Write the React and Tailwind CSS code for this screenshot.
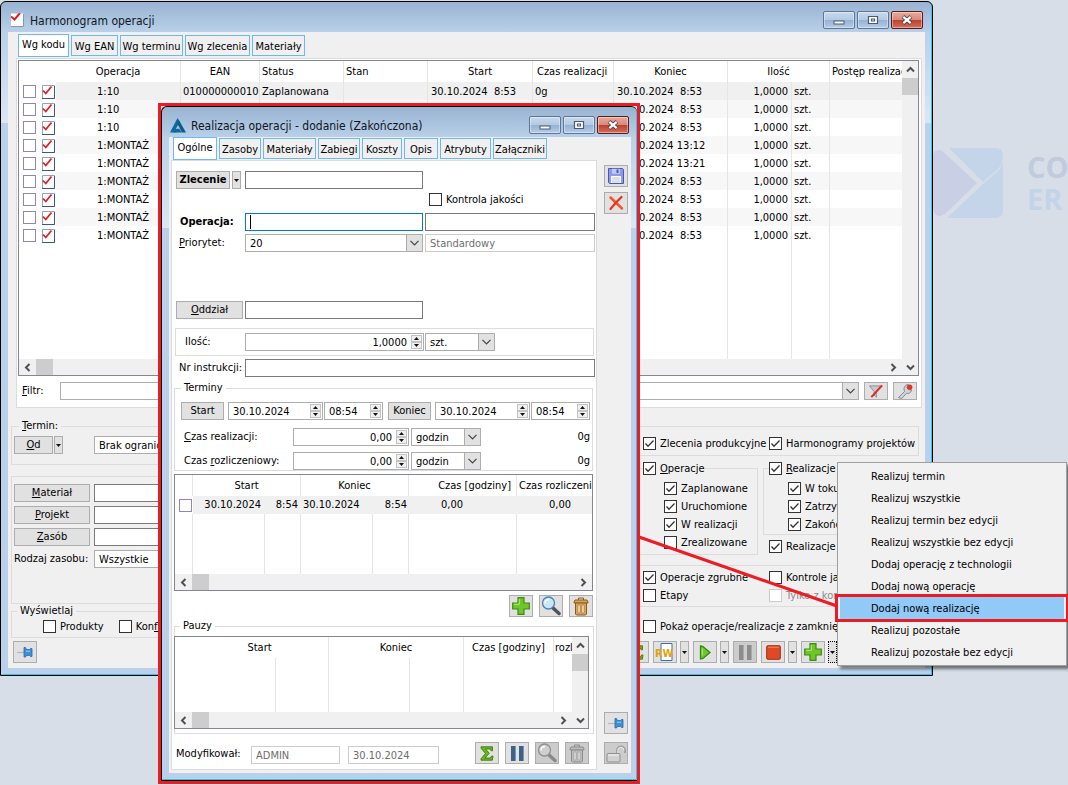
import React from "react";

/* ---------- small drawings ---------- */

const Tri = ({ up }) => (
  <svg width="5" height="3" viewBox="0 0 5 3" aria-hidden="true">
    <path d={up ? "M2.5 0 5 3H0z" : "M2.5 3 5 0H0z"} fill="#111" />
  </svg>
);

const Chevron = ({ d, size = 9 }) => (
  <svg width={size} height={size} viewBox="0 0 9 9" fill="none" stroke="#505050" strokeWidth="2" aria-hidden="true">
    <path d={d} />
  </svg>
);
const LEFT = "M6.5 1 3 4.5 6.5 8";
const RIGHT = "M2.5 1 6 4.5 2.5 8";
const UP = "M1 6.5 4.5 3 8 6.5";
const DOWN = "M1 2.5 4.5 6 8 2.5";

const DocCheck = () => (
  <svg width="13" height="14" viewBox="0 0 13 14" aria-hidden="true">
    <path d="M.5 .5h12v13H.5z" fill="#fff" stroke="#8fa3bb" />
    <path d="M12.5 1v12.5H0" fill="none" stroke="#3f5877" />
    <path d="M1 5.5 3.8 8.5 9.5 1.5" fill="none" stroke="#e02020" strokeWidth="1.8" />
  </svg>
);

const PageCheck = () => (
  <svg width="13" height="14" viewBox="0 0 13 14" aria-hidden="true">
    <path d="M0 .5h12.500v13H0z" fill="#fff" />
    <path d="M12.500 1v12.500H0" fill="none" stroke="#8798ad" />
    <path d="M0 3.500 3.500 6.500 9 0" fill="none" stroke="#e02020" strokeWidth="2" />
  </svg>
);

const Pin = () => (
  <svg width="18" height="14" viewBox="0 0 18 14" aria-hidden="true">
    <path d="M1 7.5h7" stroke="#b4b8bd" strokeWidth="1.2" />
    <path d="M8 2.500h1.500l1 2h3l1-1h1.500v8h-1.500l-1-1h-3l-1 1.500H8z" fill="#3f8fd6" stroke="#2868a8" strokeWidth=".8" />
    <path d="M10 6.200h4" stroke="#9fd0f5" />
  </svg>
);

const Plus = () => (
  <svg width="18" height="18" viewBox="0 0 18 18" aria-hidden="true">
    <path d="M6 .7h6v5.300h5.300v6H12v5.300H6V12H.7V6H6z" fill="#6fc62a" stroke="#3f8a10" strokeWidth="1.200" />
    <path d="M7.300 2v5.300H2" fill="none" stroke="#b5ec7c" />
  </svg>
);

const Lens = ({ off }) => (
  <svg width="20" height="20" viewBox="0 0 20 20" aria-hidden="true">
    <path d="M11.500 11.500 18 17.500" stroke={off ? "#8a8a8a" : "#4a5560"} strokeWidth="3.500" strokeLinecap="round" />
    <circle cx="7.500" cy="7" r="6" fill={off ? "#cfcfcf" : "#c9e7fb"} stroke={off ? "#909090" : "#4f7fae"} strokeWidth="1.300" />
    <path d="M4 7.500C4 5 5.500 3.500 8 3.500" fill="none" stroke="#fff" strokeWidth="1.300" />
  </svg>
);

const Trash = ({ off }) => {
  const line = off ? "#8c8c8c" : "#8a5a1c";
  const fill = off ? "#bdbdbd" : "#d9a75a";
  return (
    <svg width="16" height="19" viewBox="0 0 16 19" aria-hidden="true">
      <path d="M5.500 3V1h5v2" fill="none" stroke={line} />
      <path d="M2 3h12l1 2v1H1V5z" fill={fill} stroke={line} />
      <path d="M2.500 6h11v11l-1 1h-9l-1-1z" fill={fill} stroke={line} />
      <path d="M5 8h2v8H5zM9 8h2v8H9z" fill={off ? "#e6e6e6" : "#fff1d6"} stroke={line} strokeWidth=".5" />
    </svg>
  );
};

const Save = () => (
  <svg width="16" height="16" viewBox="0 0 16 16" aria-hidden="true">
    <path d="M.5 .5h14l1 1v14h-14l-1-1z" fill="#8b9bea" stroke="#4a55b5" />
    <path d="M4 .8h8v5H4z" fill="#c3ccf8" />
    <path d="M8.500 1.500h2v3.500h-2z" fill="#4a55b5" />
    <path d="M3 8h10v7H3z" fill="#fff" />
    <path d="M4 10h8M4 12h8M4 14h8" stroke="#b7c0d0" />
  </svg>
);

const RedX = () => (
  <svg width="16" height="16" viewBox="0 0 16 16" fill="none" strokeLinecap="round" aria-hidden="true">
    <path d="M2.500 2.500 14 13.500" stroke="#f0552d" strokeWidth="2.500" />
    <path d="M13.500 2 8 7.500 2.500 14" stroke="#e8331c" strokeWidth="2.200" />
  </svg>
);

const Lock = () => (
  <svg width="20" height="19" viewBox="0 0 20 19" aria-hidden="true">
    <path d="M11 10V6.500a4 4 0 0 1 8 0V9" fill="none" stroke="#a2a2a2" strokeWidth="2" />
    <path d="M11.800 10V6.500a3 3 0 0 1 6.200 0" fill="none" stroke="#eee" />
    <rect x="1" y="9.500" width="13" height="8.500" rx="1" fill="#d0d0d0" stroke="#8f8f8f" />
    <path d="M2 11h11" stroke="#f5f5f5" />
  </svg>
);

const Sigma = () => (
  <svg width="14" height="15" viewBox="0 0 14 15" aria-hidden="true">
    <path d="M1 .8h11.500v4h-1.400L10.300 3H5.500l3.800 4.300L5 12h5.500l1-2h1.500l-.6 4.200H1v-1.400L5.500 7.500 1 2.200z" fill="#69b51c" stroke="#3d7d0a" strokeWidth=".9" />
  </svg>
);

const Bars = ({ a, b }) => (
  <svg width="15" height="17" viewBox="0 0 15 17" aria-hidden="true">
    <path d="M1 1h5v15H1zM9 1h5v15H9z" fill={a} />
    <path d="M5 1h1v15H5zM13 1h1v15h-1z" fill={b} />
  </svg>
);

const Play = () => (
  <svg width="12" height="15" viewBox="0 0 12 15" aria-hidden="true">
    <path d="M1.500 1 4 1.500 11 7.500 4 13.500 1.500 14z" fill="#6cc62c" stroke="#2f8a12" strokeWidth="1.300" />
    <path d="M3.300 3.500v7" stroke="#b9ef85" />
  </svg>
);

const Stop = () => (
  <svg width="15" height="15" viewBox="0 0 15 15" aria-hidden="true">
    <rect x=".7" y=".7" width="13.600" height="13.600" rx="1" fill="#df4a26" stroke="#a82a10" />
    <path d="M2 2.200h11" stroke="#f28a68" />
  </svg>
);

const FunnelOff = () => (
  <svg width="16" height="15" viewBox="0 0 16 16" aria-hidden="true">
    <path d="M1 2h12L8.500 8v6L6 12V8z" fill="#c5c8cc" stroke="#8b8f95" />
    <path d="M14.500 1.500 3 14" stroke="#e02a1c" strokeWidth="2.200" />
  </svg>
);

const Wrench = () => (
  <svg width="17" height="16" viewBox="0 0 18 17" aria-hidden="true">
    <path d="M1.500 15.500 8 9C6.500 5.500 8 2 12 1.500L10.500 4.500l1.500 2.500 3.500.300C15 10.500 12.500 11.500 10 11l-5 5.500z" fill="#d0d3d7" stroke="#7f858c" />
    <circle cx="13.500" cy="4.500" r="2.800" fill="#e2361f" />
  </svg>
);

const AppLogo = () => (
  <svg width="16" height="15" viewBox="0 0 16 15" aria-hidden="true">
    <path d="M7.500 0 10.500 5 5.500 14.500H0z" fill="#0d6a9f" />
    <path d="M8.500 1.500 16 14.500h-4L7.500 6z" fill="#0a5c8c" />
    <path d="M5 12 9 10.500 12 14.500H3.500z" fill="#0d6a9f" />
    <path d="M8 7 5.800 11.300 9.300 9.800z" fill="#b3cbe2" />
  </svg>
);

/* ---------- controls ---------- */

const face = "flex items-center justify-center border border-[#adadad] bg-[#e1e1e1]";

const Btn = ({ className = "", children, ...p }) => (
  <button type="button" className={`${face} h-[18px] ${className}`} {...p}>
    <span>{children}</span>
  </button>
);

const IconBtn = ({ label, off, short, children }) => (
  <button
    type="button"
    aria-label={label}
    disabled={off}
    className={`flex w-[24px] shrink-0 items-center justify-center overflow-hidden border border-[#adadad] ${short ? "h-[18px]" : "h-[22px]"} ${off ? "bg-[#cccccc]" : "bg-[#e1e1e1]"}`}
  >
    {children}
  </button>
);

const Drop = ({ label, tall, focus }) => (
  <button
    type="button"
    aria-label={label}
    className={`flex w-[9px] shrink-0 items-center justify-center border bg-[#e1e1e1] ${tall ? "h-[22px]" : "h-[18px]"} ${focus ? "border-dotted border-black" : "border-[#adadad]"}`}
  >
    <Tri />
  </button>
);

const Field = ({ label, className = "", tone = "border-[#7a7a7a]", ...p }) => (
  <input aria-label={label} className={`h-[18px] min-w-0 border bg-white px-1 outline-none ${tone} ${className}`} {...p} />
);

const Combo = ({ label, value, id, className = "" }) => (
  <span className={`relative flex h-[18px] ${className}`}>
    <select id={id} aria-label={label} className="w-full appearance-none border border-[#adadad] bg-white px-1 pt-px outline-none">
      <option>{value}</option>
    </select>
    <span className="pointer-events-none absolute inset-y-0 right-0 flex w-[17px] items-center justify-center border border-[#adadad] bg-[#e1e1e1]">
      <svg width="9" height="6" viewBox="0 0 9 6" fill="none" stroke="#444" strokeWidth="1.200" aria-hidden="true">
        <path d="M.5 .8 4.500 4.800 8.500 .8" />
      </svg>
    </span>
  </span>
);

const Spin = ({ label, value, id, right, className = "" }) => (
  <span className={`relative flex h-[18px] ${className}`}>
    <input
      id={id}
      aria-label={label}
      defaultValue={value}
      className={`w-full min-w-0 border border-[#adadad] bg-white pt-px pr-4 pl-1 outline-none ${right ? "text-right" : ""}`}
    />
    <span className="absolute inset-y-[2px] right-[2px] flex w-[11px] flex-col">
      <span className="flex flex-1 items-center justify-center border border-[#c4c4c4] bg-[#f0f0f0]"><Tri up /></span>
      <span className="flex flex-1 items-center justify-center border border-[#c4c4c4] bg-[#f0f0f0]"><Tri /></span>
    </span>
  </span>
);

const Check = ({ on, off, children, className = "" }) => (
  <label className={`flex h-[14px] items-center gap-1 whitespace-nowrap ${off ? "text-[#8a8a8a]" : ""} ${className}`}>
    <span className="relative flex">
      <input
        type="checkbox"
        defaultChecked={on}
        disabled={off}
        className={`peer size-[13px] appearance-none border bg-white ${off ? "border-[#cccccc]" : "border-[#333333]"}`}
      />
      <svg className="pointer-events-none absolute inset-0 hidden peer-checked:block" width="13" height="13" viewBox="0 0 13 13" fill="none" stroke="#333" strokeWidth="1.300" aria-hidden="true">
        <path d="M2.500 6.500 5 9.200 10.500 3.500" />
      </svg>
    </span>
    <span className="pt-px">{children}</span>
  </label>
);

const RowCheck = ({ label }) => (
  <input type="checkbox" aria-label={label} className="size-[13px] shrink-0 appearance-none border border-[#8f86b8] bg-white" />
);

const Tabs = ({ items }) => (
  <div role="tablist" className="flex items-end gap-[2px]">
    {items.map(([name, w], i) => (
      <button
        key={name}
        role="tab"
        type="button"
        aria-selected={i === 0}
        className={`flex justify-center border border-[#6cb8f7] whitespace-nowrap ${w} ${i === 0 ? "h-[23px] bg-white pt-[3px]" : "mb-px h-[21px] bg-[#f0f0f0] pt-1"}`}
      >
        {name}
      </button>
    ))}
  </div>
);

const HScroll = () => (
  <div className="flex h-4 min-w-0 flex-1 items-center bg-[#f0f0f0] pr-1">
    <span className="flex w-[17px] justify-center"><Chevron d={LEFT} /></span>
    <span className="h-full w-[17px] bg-[#cdcdcd]" />
    <span className="ml-auto"><Chevron d={RIGHT} /></span>
  </div>
);

const VScroll = () => (
  <div className="flex w-4 shrink-0 flex-col items-center bg-[#f0f0f0]">
    <span className="flex h-[17px] items-center"><Chevron d={UP} /></span>
    <span className="h-[17px] w-full bg-[#cdcdcd]" />
    <span className="mt-auto flex h-4 items-center"><Chevron d={DOWN} /></span>
  </div>
);

const capBlue = "border-[#5d7597] bg-[linear-gradient(#c9d9ec,#b4cae3_48%,#94b1d3_50%,#b4cde8)]";
const capRed = "border-[#5c1a1a] bg-[linear-gradient(#e9a99b,#d98a7b_48%,#bb4028_50%,#d2705c)]";

const Caption = () => (
  <div className="ml-auto flex gap-[2px] pr-[2px]">
    {[
      ["Minimalizuj", capBlue, <rect key="a" x="1" y="6" width="10" height="3" fill="#fff" stroke="#4a5a70" />],
      ["Maksymalizuj", capBlue, <path key="b" d="M1.500 1.500h9v7h-9zM4.500 4h3v2h-3z" fill="#fff" stroke="#4a5a70" strokeWidth="1.200" />],
      [
        "Zamknij",
        capRed,
        <g key="c" fill="none">
          <path d="M2 1.500 10 8.500M10 1.500 2 8.500" stroke="#59424a" strokeWidth="4" />
          <path d="M2.300 1.800 9.700 8.200M9.700 1.800 2.300 8.200" stroke="#fff" strokeWidth="2.200" />
        </g>,
      ],
    ].map(([n, c, g]) => (
      <button key={n} type="button" aria-label={n} className={`flex h-[18px] w-8 items-center justify-center rounded-xs border shadow-[inset_0_0_0_1px_rgba(255,255,255,0.4)] ${c}`}>
        <svg width="12" height="10" viewBox="0 0 12 10" aria-hidden="true">{g}</svg>
      </button>
    ))}
  </div>
);

const Win = ({ icon, title, edge, children }) => (
  <section
    aria-label={title}
    className={`rounded-t-md border border-black bg-[linear-gradient(#99b3d1,#b9d1ea_31px,#dae7f5_121px,#b9d1ea_121px)] pb-[7px] pl-[7px] shadow-[inset_-1px_-1px_#35c3e6] ${edge}`}
  >
    <header className="flex h-[30px] items-center gap-1 pt-[6px]">
      <span className="flex w-[18px] justify-center">{icon}</span>
      <h1 className="pt-[2px] text-[12px] whitespace-nowrap text-[#10151c]">{title}</h1>
      <Caption />
    </header>
    {children}
  </section>
);

const line = "border-r border-[#e5e5e5]";

/* ---------- schedule window ---------- */

const ROWS = [
  ["1:10", "30.10.2024  8:53"],
  ["1:10", "30.10.2024  8:53"],
  ["1:10", "30.10.2024  8:53"],
  ["1:MONTAŻ", "30.10.2024 13:12"],
  ["1:MONTAŻ", "30.10.2024 13:21"],
  ["1:MONTAŻ", "30.10.2024  8:53"],
  ["1:MONTAŻ", "30.10.2024  8:53"],
  ["1:MONTAŻ", "30.10.2024  8:53"],
  ["1:MONTAŻ", "30.10.2024  8:53"],
];

const ScheduleGrid = () => (
  <div className="border border-[#828790] bg-white">
    <div className="flex">
      <div className="min-w-0 flex-1 overflow-hidden">
        <table className="w-full table-fixed border-separate border-spacing-0 whitespace-pre">
          <colgroup>
            <col className="w-[37px]" />
            <col className="w-[125px]" />
            <col className="w-[79px]" />
            <col className="w-[84px]" />
            <col className="w-[84px]" />
            <col className="w-[105px]" />
            <col className="w-[81px]" />
            <col className="w-[114px]" />
            <col className="w-[64px]" />
            <col className="w-[38px]" />
            <col />
          </colgroup>
          <thead>
            <tr className="h-[21px] text-left *:p-0 *:font-normal">
              <th aria-label="Zaznaczenie" />
              <th className={`${line} text-center`}>Operacja</th>
              <th className={`${line} text-center`}>EAN</th>
              <th className={line}><span className="pl-[2px]">Status</span></th>
              <th className={line}><span className="pl-[2px]">Stan</span></th>
              <th className={`${line} text-center`}>Start</th>
              <th className={line}><span className="pl-1">Czas realizacji</span></th>
              <th className={`${line} text-center`}>Koniec</th>
              <th className={`${line} text-center`} colSpan={2}>Ilość</th>
              <th className="overflow-hidden"><span className="pl-[2px]">Postęp realizacji</span></th>
            </tr>
          </thead>
          <tbody>
            {ROWS.map(([op, end], i) => (
              <tr
                key={i}
                className={`h-[18px] *:px-0 *:pt-[2px] *:pb-0 ${i === 0 ? "bg-[#f0f0f0]" : i % 2 ? "bg-[#f7f7f7]" : "bg-white"}`}
              >
                <td className="bg-white">
                  <span className="flex gap-[6px] pl-1">
                    <RowCheck label={`Wiersz ${i + 1}`} />
                    <DocCheck />
                  </span>
                </td>
                <td className={line}><span className="pl-[41px]">{op}</span></td>
                <td className={line}><span className="pl-[2px]">{i === 0 && "010000000010"}</span></td>
                <td className={line}><span className="pl-[2px]">{i === 0 && "Zaplanowana"}</span></td>
                <td className={line} />
                <td className={line}><span className="pl-[3px]">{i === 0 && "30.10.2024  8:53"}</span></td>
                <td className={line}><span className="pl-[2px]">{i === 0 && "0g"}</span></td>
                <td className={line}><span className="pl-[3px]">{end}</span></td>
                <td className={`${line} text-right`}><span className="pr-[3px]">1,0000</span></td>
                <td className={line}><span className="pl-[2px]">szt.</span></td>
                <td />
              </tr>
            ))}
            <tr className="h-[115px]" aria-hidden="true">
              <td />
              {[1, 2, 3, 4, 5, 6, 7, 8, 9].map((n) => <td key={n} className={line} />)}
              <td />
            </tr>
          </tbody>
        </table>
        <HScroll />
      </div>
      <VScroll />
    </div>
  </div>
);

const box = "border border-[#dcdcdc]";

const LeftFilters = () => (
  <div className="w-[610px] shrink-0 pt-[11px]">
    <fieldset className={`${box} min-w-0 pt-[3px] pb-[10px] pl-[2px]`}>
      <legend className="ml-[5px] px-[3px]"><u>T</u>ermin:</legend>
      <div className="flex">
        <Btn className="w-[39px]"><u>O</u>d</Btn>
        <span className="ml-px flex"><Drop label="Rodzaj terminu" /></span>
        <Combo label="Termin" value="Brak ograniczeń" className="ml-[31px] w-[200px]" />
      </div>
    </fieldset>
    <div className={`${box} mt-[11px] grid grid-cols-[76px_300px] gap-1 pt-[7px] pb-[35px] pl-[2px]`}>
      <Btn><u>M</u>ateriał</Btn>
      <Field label="Materiał" />
      <Btn><u>P</u>rojekt</Btn>
      <Field label="Projekt" />
      <Btn><u>Z</u>asób</Btn>
      <Field label="Zasób" />
      <label htmlFor="rodzaj" className="pt-[2px] whitespace-nowrap">Rodzaj zasobu:</label>
      <Combo id="rodzaj" value="Wszystkie" />
    </div>
    <fieldset className={`${box} min-w-0 pt-px pb-1`}>
      <legend className="ml-[5px] px-[3px]">Wyświetlaj</legend>
      <div className="flex gap-[15px] pl-[31px]">
        <Check>Produkty</Check>
        <Check>Kon<u>fl</u>ikty</Check>
      </div>
    </fieldset>
    <div className="mt-[3px] pl-[2px]"><IconBtn label="Przypnij"><Pin /></IconBtn></div>
  </div>
);

const RightFilters = () => (
  <div className="min-w-0 flex-1 pt-[18px]">
    <div className={`${box} mr-[3px] grid grid-cols-[126px_1fr] pt-[9px] pb-[5px] pl-[21px]`}>
      <Check on>Zlecenia produkcyjne</Check>
      <Check on>Harmonogramy projektów</Check>
    </div>
    <div className="mt-[5px] grid grid-cols-[137px_1fr] items-start gap-[5px]">
      <fieldset className={`${box} flex min-w-0 flex-col gap-1 pt-[6px] pb-[5px] pl-[42px]`}>
        <legend className="-ml-[21px]"><Check on><u>O</u>peracje</Check></legend>
        <Check on>Zaplanowane</Check>
        <Check on>Uruchomione</Check>
        <Check on>W realizacji</Check>
        <Check>Zrealizowane</Check>
      </fieldset>
      <div>
        <fieldset className={`${box} min-w-0 pt-[6px] pb-[3px] pl-6`}>
          <legend className="-ml-[19px]"><Check on><u>R</u>ealizacje zleceń</Check></legend>
          <div className="flex flex-col gap-1">
            <Check on>W toku</Check>
            <Check on>Zatrzymane</Check>
            <Check on>Zakończone</Check>
          </div>
        </fieldset>
        <Check on className="mt-1 pl-[6px]">Realizacje z projektów</Check>
      </div>
    </div>
    <div className={`${box} mt-[10px] grid grid-cols-[126px_1fr] gap-y-1 pt-1 pb-1 pl-[21px]`}>
      <Check on>Operacje zgrubne</Check>
      <Check>Kontrole jakości</Check>
      <Check>Etapy</Check>
      <Check off>Tylko z kontrolą</Check>
    </div>
    <Check className="mt-[12px] pl-[22px]">Pokaż operacje/realizacje z zamkniętych</Check>
    <div className="mt-2 flex gap-1 pl-1">
      <IconBtn label="Bilans"><Sigma /></IconBtn>
      <div className="flex gap-[3px]">
        <IconBtn label="Rozchód wewnętrzny">
          <svg width="22" height="18" viewBox="0 0 22 18" aria-hidden="true">
            <path d="M7 .5h11v17H7z" fill="#fff" stroke="#3b6ea8" />
            <text x="1" y="13.500" fontSize="11" fontWeight="700" fill="#dca30c" fontFamily="DejaVu Sans Condensed, sans-serif">RW</text>
          </svg>
        </IconBtn>
        <Drop tall label="Więcej dokumentów" />
      </div>
      <div className="flex gap-[3px]">
        <IconBtn label="Uruchom"><Play /></IconBtn>
        <Drop tall label="Opcje uruchomienia" />
      </div>
      <IconBtn off label="Wstrzymaj"><Bars a="#8c8c8c" b="#aaaaaa" /></IconBtn>
      <div className="flex gap-[3px]">
        <IconBtn label="Zakończ"><Stop /></IconBtn>
        <Drop tall label="Opcje zakończenia" />
      </div>
      <div className="flex gap-[3px]">
        <IconBtn label="Dodaj"><Plus /></IconBtn>
        <Drop tall focus label="Opcje dodawania" />
      </div>
    </div>
  </div>
);

const Schedule = () => (
  <Win icon={<PageCheck />} title="Harmonogram operacji" edge="pr-[7px]">
    <div className="bg-[#f0f0f0] pt-[2px] pr-[3px] pb-[5px]">
      <div className="pl-[10px]">
        <Tabs
          items={[
            ["Wg kodu", "w-[51px]"],
            ["Wg EAN", "w-[47px]"],
            ["Wg terminu", "w-[63px]"],
            ["Wg zlecenia", "w-[65px]"],
            ["Materiały", "w-[53px]"],
          ]}
        />
      </div>
      <div className={`${box} mt-px ml-2 bg-white pt-px pr-[2px] pb-[7px] pl-px`}>
        <ScheduleGrid />
        <div className="mt-[6px] flex items-center gap-[5px] pr-[2px] pl-1">
          <label htmlFor="filtr" className="w-[33px]"><u>F</u>iltr:</label>
          <Combo id="filtr" value="" className="min-w-0 flex-1" />
          <IconBtn short label="Wyczyść filtr"><FunnelOff /></IconBtn>
          <IconBtn short label="Konstruktor filtra"><Wrench /></IconBtn>
        </div>
      </div>
      <div className="flex pl-[3px]">
        <LeftFilters />
        <RightFilters />
      </div>
    </div>
  </Win>
);

/* ---------- realization dialog ---------- */

const ROW = "grid grid-cols-[67px_178px_1fr] items-center gap-x-[2px] pr-px pl-1";

const TimeGrid = () => (
  <div className="mt-[3px] mr-[3px] ml-[2px] overflow-hidden border border-[#828790]">
    <table className="w-full table-fixed border-separate border-spacing-0 whitespace-nowrap">
      <colgroup>
        <col className="w-[18px]" />
        <col className="w-[72px]" />
        <col className="w-[36px]" />
        <col className="w-[72px]" />
        <col className="w-[36px]" />
        <col className="w-[108px]" />
        <col />
      </colgroup>
      <thead>
        <tr className="h-[21px] *:p-0 *:font-normal">
          <th className={line} aria-label="Zaznaczenie" />
          <th className={line} colSpan={2}>Start</th>
          <th className={line} colSpan={2}>Koniec</th>
          <th className={`${line} text-right`}><span className="pr-[5px]">Czas [godziny]</span></th>
          <th className="overflow-hidden text-left"><span className="pl-[2px]">Czas rozliczeniowy</span></th>
        </tr>
      </thead>
      <tbody>
        <tr className="h-[18px] bg-[#f0f0f0] *:p-0">
          <td className="bg-white"><span className="flex pl-1"><RowCheck label="Pozycja 1" /></span></td>
          <td className="text-right"><span className="pr-1">30.10.2024</span></td>
          <td className="text-right"><span className="pr-[3px]">8:54</span></td>
          <td><span className="pl-[2px]">30.10.2024</span></td>
          <td className="text-right"><span className="pr-[2px]">8:54</span></td>
          <td><span className="pl-8">0,00</span></td>
          <td><span className="pl-8">0,00</span></td>
        </tr>
        <tr className="h-[60px]" aria-hidden="true">
          {[1, 2, 3, 4, 5, 6].map((n) => <td key={n} className={line} />)}
          <td />
        </tr>
      </tbody>
    </table>
    <HScroll />
  </div>
);

const PauseGrid = () => (
  <div className="-ml-px mr-1 flex overflow-hidden border border-[#828790]">
    <div className="min-w-0 flex-1 overflow-hidden">
      <table className="w-full table-fixed border-separate border-spacing-0 whitespace-nowrap">
        <colgroup>
          <col className="w-[101px]" />
          <col className="w-[53px]" />
          <col className="w-[81px]" />
          <col className="w-[54px]" />
          <col className="w-[90px]" />
          <col />
        </colgroup>
        <thead>
          <tr className="h-[21px] *:p-0 *:font-normal">
            <th className={line} colSpan={2}><span className="pl-4">Start</span></th>
            <th className={line} colSpan={2}>Koniec</th>
            <th className={line}>Czas [godziny]</th>
            <th className="overflow-hidden text-left"><span className="pl-px">rozl</span></th>
          </tr>
        </thead>
        <tbody>
          <tr className="h-[54px]" aria-hidden="true">
            {[1, 2, 3, 4, 5].map((n) => <td key={n} className={line} />)}
            <td />
          </tr>
        </tbody>
      </table>
      <HScroll />
    </div>
    <VScroll />
  </div>
);

const DateGroup = ({ name }) => (
  <div className="flex gap-1">
    <Btn className="w-[43px]">{name}</Btn>
    <div className="flex gap-px">
      <Spin label={`${name} – data`} value="30.10.2024" className="w-[95px]" />
      <Spin label={`${name} – godzina`} value="08:54" className="w-[59px]" />
    </div>
  </div>
);

const TimeRow = ({ id, text, className }) => (
  <div className={`flex items-center pr-[2px] pl-[9px] ${className}`}>
    <label htmlFor={id} className="w-[109px] whitespace-nowrap">{text}</label>
    <Spin id={id} value="0,00" right className="w-[116px]" />
    <Combo label="Jednostka czasu" value="godzin" className="ml-[2px] w-[70px]" />
    <span className="ml-auto">0g</span>
  </div>
);

const Dialog = () => (
  <Win icon={<AppLogo />} title="Realizacja operacji - dodanie (Zakończona)" edge="border-r-0 pr-[6px]">
    <div className="flex bg-[#f0f0f0] pb-[3px] pl-[2px]">
      <div className="min-w-0 flex-1">
        <div className="pl-[2px]">
          <Tabs
            items={[
              ["Ogólne", "w-[44px]"],
              ["Zasoby", "w-[42px]"],
              ["Materiały", "w-[53px]"],
              ["Zabiegi", "w-[42px]"],
              ["Koszty", "w-[40px]"],
              ["Opis", "w-[34px]"],
              ["Atrybuty", "w-[51px]"],
              ["Załączniki", "w-[54px]"],
            ]}
          />
        </div>
        <div className={`${box} bg-white pt-[10px] pb-[5px]`}>
          <div className={ROW}>
            <div className="flex gap-[2px]">
              <Btn className="w-[54px] font-bold">Zlecenie</Btn>
              <Drop label="Rodzaj zlecenia" />
            </div>
            <Field label="Zlecenie" />
          </div>
          <div className={`${ROW} mt-[3px]`}>
            <Check className="col-start-3 pl-1">Kontrola jakości</Check>
          </div>
          <div className={`${ROW} mt-[7px]`}>
            <label htmlFor="operacja" className="pl-1 font-bold">Operacja:</label>
            <div className="relative flex">
              <Field id="operacja" tone="border-[#0078d7]" className="w-full" />
              <span className="absolute inset-y-[2px] left-[5px] w-px bg-black" />
            </div>
            <Field label="Nazwa operacji" />
          </div>
          <div className={`${ROW} mt-[3px]`}>
            <label htmlFor="priorytet" className="pl-[3px]"><u>P</u>riorytet:</label>
            <Combo id="priorytet" value="20" />
            <Field label="Opis priorytetu" defaultValue="Standardowy" disabled tone="border-[#cccccc]" className="text-[#6d6d6d]" />
          </div>
          <div className={`${ROW} mt-[49px]`}>
            <Btn><u>O</u>ddział</Btn>
            <Field label="Oddział" />
          </div>
          <div className={`${box} mt-[9px] mr-[2px] ml-[3px] flex items-center gap-px pt-1 pb-1 pl-[9px]`}>
            <label htmlFor="ilosc" className="w-[59px]">Ilość:</label>
            <Spin id="ilosc" value="1,0000" right className="w-[179px]" />
            <Combo label="Jednostka" value="szt." className="w-[70px]" />
          </div>
          <div className={`${ROW} mt-[3px]`}>
            <label htmlFor="instrukcja" className="pl-[3px] whitespace-nowrap">Nr instrukcji:</label>
            <Field id="instrukcja" className="col-span-2" />
          </div>
          <fieldset className={`${box} mt-1 mr-[3px] ml-[2px] min-w-0 pt-[7px]`}>
            <legend className="ml-[6px] px-[3px]">Terminy</legend>
            <div className="flex gap-[5px] pl-[6px]">
              <DateGroup name="Start" />
              <DateGroup name="Koniec" />
            </div>
            <TimeRow id="czas-r" text={<><u>C</u>zas realizacji:</>} className="mt-2" />
            <TimeRow id="czas-z" text={<>Czas <u>r</u>ozliczeniowy:</>} className="mt-[6px]" />
          </fieldset>
          <TimeGrid />
          <div className="mt-1 mr-[3px] flex justify-end gap-[6px]">
            <IconBtn label="Dodaj pozycję"><Plus /></IconBtn>
            <IconBtn label="Podgląd pozycji"><Lens /></IconBtn>
            <IconBtn label="Usuń pozycję"><Trash /></IconBtn>
          </div>
          <fieldset className={`${box} mt-[2px] mr-[2px] ml-[2px] min-w-0 pt-[3px] pb-1`}>
            <legend className="ml-[5px] px-[3px]">Pauzy</legend>
            <PauseGrid />
          </fieldset>
          <div className="mt-2 flex items-end pr-[7px] pl-1">
            <label htmlFor="modyf" className="w-[75px] pb-[3px] whitespace-nowrap">Modyfikował:</label>
            <Field id="modyf" disabled defaultValue="ADMIN" tone="border-[#cccccc]" className="w-[89px] text-[#6d6d6d]" />
            <Field label="Data modyfikacji" disabled defaultValue="30.10.2024" tone="border-[#cccccc]" className="ml-2 w-[91px] text-[#6d6d6d]" />
            <div className="ml-auto flex gap-[6px]">
              <IconBtn label="Sumuj"><Sigma /></IconBtn>
              <IconBtn label="Pauza"><Bars a="#3d6286" b="#7d97b0" /></IconBtn>
              <IconBtn off label="Podgląd pauzy"><Lens off /></IconBtn>
              <IconBtn off label="Usuń pauzę"><Trash off /></IconBtn>
            </div>
          </div>
        </div>
      </div>
      <aside className="flex w-[34px] flex-col gap-[5px] pt-[28px] pb-[6px] pl-[7px]">
        <IconBtn label="Zapisz"><Save /></IconBtn>
        <IconBtn label="Anuluj"><RedX /></IconBtn>
        <div className="mt-auto flex flex-col gap-2">
          <IconBtn label="Przypnij okno"><Pin /></IconBtn>
          <IconBtn off label="Zablokuj"><Lock /></IconBtn>
        </div>
      </aside>
    </div>
  </Win>
);

/* ---------- context menu ---------- */

const MENU = [
  "Realizuj termin",
  "Realizuj wszystkie",
  "Realizuj termin bez edycji",
  "Realizuj wszystkie bez edycji",
  "Dodaj operację z technologii",
  "Dodaj nową operację",
  "Dodaj nową realizację",
  "Realizuj pozostałe",
  "Realizuj pozostałe bez edycji",
];

const Menu = () => (
  <ul role="menu" className="border border-[#a0a0a0] bg-[#f1f1f1] p-[2px] shadow-[3px_3px_3px_rgba(0,0,0,0.5)]">
    {MENU.map((m) => {
      const hot = m === "Dodaj nową realizację";
      return (
        <li key={m} role="none" className="relative">
          <button type="button" role="menuitem" className={`flex h-[22px] w-full items-center pt-px pl-[31px] whitespace-nowrap ${hot ? "bg-[#91c9f7]" : ""}`}>
            {m}
          </button>
          {hot && <span className="pointer-events-none absolute -inset-x-[5px] -inset-y-[3px] border-3 border-[#ed1c24]" />}
        </li>
      );
    })}
  </ul>
);

export default function App() {
  return (
    <main className="relative min-h-screen overflow-hidden bg-[#d7dee8] pt-px text-[11px] leading-[14px] text-black [font-family:'DejaVu_Sans_Condensed','Roboto',sans-serif]">
      <div className="absolute top-[148px] left-[933px] flex items-center gap-6" aria-hidden="true">
        <svg width="70" height="70" viewBox="0 0 70 70">
          <path d="M0 8Q0 1 8 2L44 35 12 66Q2 72 0 60z" fill="#c9cfe4" />
          <path d="M16 0H62Q70 0 70 8 70 16 64 22L50 34z" fill="#c5d5e9" />
          <path d="M70 14V62Q70 70 62 70H14L51 35 66 22z" fill="#c5d5e9" />
        </svg>
        <div className="text-[29px] leading-[32px] font-bold [font-family:'Open_Sans',sans-serif]">
          <div className="text-[#c2cbdb]">CO</div>
          <div className="text-[#c3d3e8]">ER</div>
        </div>
      </div>

      <div className="relative mr-[135px]">
        <Schedule />
      </div>

      <div className="absolute top-[103px] left-[158px] w-[482px] border-3 border-[#ed1c24] bg-[#d7dee8]">
        <Dialog />
      </div>

      <svg className="pointer-events-none absolute top-[534px] left-[638px]" width="202" height="76" viewBox="0 0 202 76" aria-hidden="true">
        <path d="M1 3 199 72" stroke="#ed1c24" strokeWidth="3" />
      </svg>

      <div className="absolute top-[462px] left-[837px] w-[230px]">
        <Menu />
      </div>
    </main>
  );
}
